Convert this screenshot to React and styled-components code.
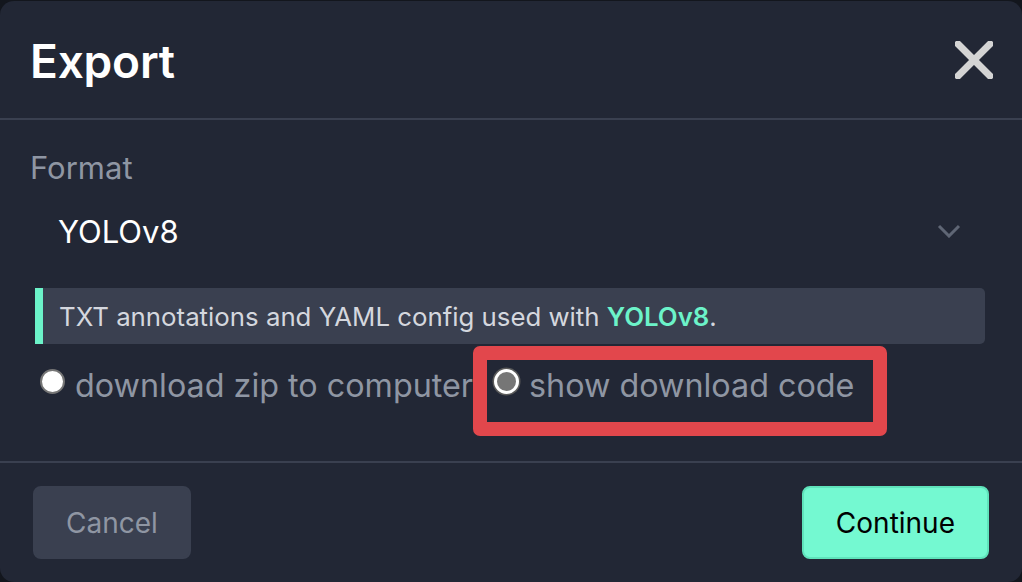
import React from "react";
import styled, { createGlobalStyle } from "styled-components";

const Global = createGlobalStyle`
  html, body { margin: 0; padding: 0; background: #13161d; }
  body { font-family: Inter, "Noto Sans", sans-serif; -webkit-font-smoothing: antialiased; }
  * { box-sizing: border-box; }
`;

const Modal = styled.div`
  position: relative;
  width: 1022px;
  height: 581px;
  margin-top: 1px;
  background: #222735;
  border-radius: 14px;
  display: flex;
  flex-direction: column;
  overflow: hidden;
`;

const Header = styled.div`
  height: 117px;
  display: flex;
  align-items: center;
  justify-content: space-between;
  padding: 0 28px 0 30px;
`;

const Title = styled.h1`
  margin: 0;
  font-size: 46px;
  font-weight: 600;
  color: #ffffff;
  letter-spacing: -0.2px;
  padding-top: 2px;
`;

const CloseButton = styled.button`
  background: none;
  border: 0;
  padding: 0;
  width: 40px;
  height: 40px;
  display: flex;
  align-items: center;
  justify-content: center;
  cursor: pointer;
`;

const Divider = styled.div`
  height: 2px;
  background: #3a4050;
`;

const Body = styled.div`
  flex: 1;
  padding: 28px 37px 0 30px;
  display: flex;
  flex-direction: column;
`;

const Label = styled.div`
  font-size: 31px;
  color: #8f96a3;
  line-height: 40px;
`;

const Select = styled.div`
  margin-top: 18px;
  height: 50px;
  display: flex;
  align-items: center;
  justify-content: space-between;
  padding: 0 24px 0 28px;
`;

const SelectValue = styled.span`
  font-size: 31px;
  color: #ffffff;
`;

const Info = styled.div`
  margin: 32px 0 0 5px;
  height: 56px;
  display: flex;
  align-items: center;
  background: #3a4050;
  border-left: 8px solid #6cf3c9;
  border-radius: 0 5px 5px 0;
  padding-left: 16px;
  font-size: 25.8px;
  color: #d4d7de;
`;

const Accent = styled.span`
  color: #6cf3c9;
  font-weight: 600;
`;

const Options = styled.div`
  margin: 22px 0 0 10px;
  display: flex;
  align-items: center;
`;

const Option = styled.label`
  display: flex;
  align-items: center;
  gap: 10px;
  font-size: 32.3px;
  color: #8f96a3;
  margin-right: ${(p) => p.$gap || 0}px;
`;

const Radio = styled.span`
  width: 25px;
  height: 25px;
  border-radius: 50%;
  flex: none;
  background: ${(p) => (p.$checked ? "#767676" : "#ffffff")};
  border: ${(p) => (p.$checked ? "3px solid #ffffff" : "2px solid #767676")};
  box-shadow: ${(p) => (p.$checked ? "0 0 0 1.5px #5a5a5a" : "none")};
  margin-top: -8px;
`;

const Highlight = styled.div`
  position: absolute;
  left: 473px;
  top: 345px;
  width: 414px;
  height: 90px;
  border: 14px solid #e2474c;
  border-radius: 7px;
  pointer-events: none;
`;

const Footer = styled.div`
  height: 119px;
  display: flex;
  align-items: center;
  justify-content: space-between;
  padding: 0 33px 0 33px;
`;

const Button = styled.button`
  height: 73px;
  padding: 0 ${(p) => (p.$primary ? 32 : 31)}px;
  border-radius: 8px;
  font-family: inherit;
  font-size: 28px;
  background: ${(p) => (p.$primary ? "#74f9d1" : "#3a4050")};
  color: ${(p) => (p.$primary ? "#000000" : "#8f96a3")};
  border: 2px solid ${(p) => (p.$primary ? "#5fe3bb" : "#3a4050")};
  cursor: pointer;
`;

export default function App() {
  return (
    <>
      <Global />
      <Modal>
        <Header>
          <Title>Export</Title>
          <CloseButton aria-label="Close">
            <svg width="38" height="38" viewBox="0 0 38 38">
              <path d="M3 3 L35 35 M35 3 L3 35" stroke="#d4d4d4" strokeWidth="7" strokeLinecap="square" />
            </svg>
          </CloseButton>
        </Header>
        <Divider />
        <Body>
          <Label>Format</Label>
          <Select>
            <SelectValue>YOLOv8</SelectValue>
            <svg width="24" height="14" viewBox="0 0 24 14">
              <path d="M2 2 L12 12 L22 2" stroke="#5f6675" strokeWidth="3" fill="none" />
            </svg>
          </Select>
          <Info>
            TXT annotations and YAML config used with&nbsp;<Accent>YOLOv8</Accent>.
          </Info>
          <Options>
            <Option $gap={21}>
              <Radio />
              download zip to computer
            </Option>
            <Option>
              <Radio $checked />
              show download code
            </Option>
          </Options>
        </Body>
        <Divider />
        <Footer>
          <Button>Cancel</Button>
          <Button $primary>Continue</Button>
        </Footer>
        <Highlight />
      </Modal>
    </>
  );
}
